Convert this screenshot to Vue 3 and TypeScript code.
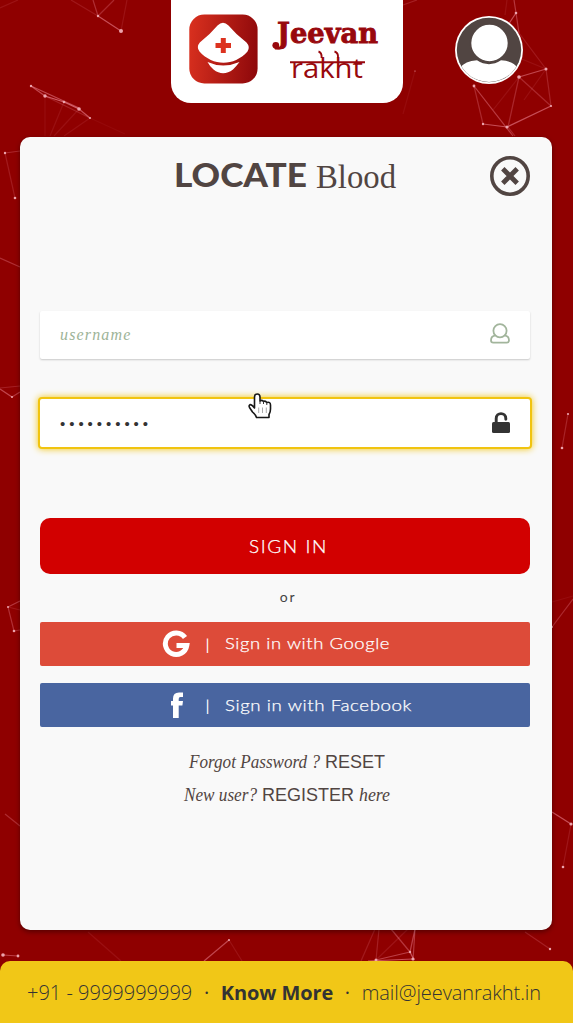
<script setup lang="ts">
type Line = [number, number, number, number, number]

const lines: Line[] = [
  [98, 16, 121, 31, 0.5], [93, 0, 98, 16, 0.3], [98, 16, 114, 0, 0.25], [121, 31, 127, 0, 0.12], [71, 0, 98, 16, 0.15], [0, 8, 18, 0, 0.12],
  [31, 86, 45, 96, 0.45], [45, 96, 64, 102, 0.6], [64, 102, 79, 109, 0.6], [79, 109, 90, 118, 0.5], [31, 86, 79, 108, 0.45], [45, 96, 90, 118, 0.2],
  [45, 97, 45, 136, 0.08], [64, 102, 50, 136, 0.1], [79, 109, 54, 136, 0.1], [90, 118, 64, 136, 0.1], [90, 118, 125, 134, 0.06],
  [5, 153, 20, 151, 0.25], [5, 153, 15, 198, 0.17], [0, 258, 20, 267, 0.3], [0, 389, 12, 397, 0.45], [12, 397, 20, 392, 0.35], [0, 388, 20, 386, 0.2],
  [8, 607, 20, 601, 0.35], [8, 607, 14, 631, 0.3], [14, 631, 20, 630, 0.25], [8, 607, 20, 610, 0.15], [5, 814, 20, 826, 0.28], [3, 955, 18, 956, 0.4],
  [204, 961, 229, 940, 0.45], [229, 940, 242, 961, 0.12], [88, 932, 121, 961, 0.1],
  [376, 960, 410, 952, 0.4], [410, 952, 391, 929, 0.35], [410, 952, 415, 929, 0.4], [413, 960, 415, 929, 0.35], [376, 960, 379, 929, 0.2], [361, 961, 375, 929, 0.17],
  [376, 960, 408, 929, 0.13], [413, 959, 368, 961, 0.5], [410, 952, 414, 960, 0.5], [525, 932, 550, 949, 0.2],
  [514, 0, 516, 13, 0.35], [507, 0, 505, 15, 0.1], [516, 13, 508, 25, 0.5], [516, 13, 519, 33, 0.35], [519, 33, 546, 69, 0.16], [519, 77, 546, 69, 0.45], [519, 77, 508, 127, 0.25],
  [500, 50, 546, 69, 0.1], [546, 69, 551, 106, 0.22], [519, 77, 551, 106, 0.25], [551, 106, 507, 127, 0.5], [507, 127, 483, 124, 0.5], [483, 124, 474, 86, 0.25],
  [474, 86, 513, 136, 0.38], [508, 127, 515, 136, 0.25], [546, 69, 524, 100, 0.1], [519, 77, 493, 110, 0.1],
  [568, 414, 562, 448, 0.23], [552, 627, 573, 599, 0.27], [552, 602, 573, 596, 0.08], [552, 812, 571, 824, 0.5], [571, 824, 563, 867, 0.14],
  [403, 5, 417, 0, 0.2], [403, 114, 415, 71, 0.07],
]

const nodes: [number, number, number][] = [
  [98, 16, 1.2], [121, 31, 2], [31, 86, 1.2], [45, 96, 1.7], [64, 102, 1.3], [79, 109, 1.8], [90, 118, 1.1], [5, 153, 1.2], [15, 198, 1.3], [8, 607, 1],
  [14, 631, 1.3], [12, 397, 1], [3, 955, 1.8], [18, 956, 1.4], [229, 940, 1], [376, 960, 1.5], [413, 959, 1.6], [410, 952, 1.2], [550, 949, 1.2], [516, 13, 1.3],
  [519, 77, 1.8], [546, 69, 1.5], [551, 106, 1.1], [507, 127, 1.5], [483, 124, 1.2], [474, 86, 1.4], [568, 414, 1.1], [562, 448, 1.3], [571, 824, 1.6], [563, 867, 1.3],
  [415, 71, 0.6], [552, 627, 0.9],
]
</script>

<template>
  <main class="screen">
    <svg class="network" viewBox="0 0 573 1023" aria-hidden="true">
      <line v-for="(l, i) in lines" :key="`l${i}`" :x1="l[0]" :y1="l[1]" :x2="l[2]" :y2="l[3]" :stroke-opacity="l[4]" />
      <circle v-for="(n, i) in nodes" :key="`n${i}`" :cx="n[0]" :cy="n[1]" :r="n[2]" />
    </svg>

    <header class="top">
      <div class="brand">
        <svg width="232" height="103" viewBox="171 0 232 103">
          <defs>
            <linearGradient id="badge" x1="0" x2="1" y1="0.45" y2="0.55">
              <stop offset="0" stop-color="#d72f1e" />
              <stop offset="1" stop-color="#8f090b" />
            </linearGradient>
          </defs>
          <rect x="189.3" y="14.5" width="68.3" height="69" rx="15" fill="url(#badge)" />
          <path d="M217.500 25.500Q223 20 228.500 25.500Q236 34.500 246.500 42.500Q250.500 47 247.500 51.500C234 66.500 213 66.500 199.500 51.500Q196 47 199.800 42.500Q210 34.500 217.500 25.500Z" fill="#fff" />
          <path d="M207.500 62Q223 69 239.500 62Q236.500 66 233 69.500Q223 77 213.500 69.500Q209.500 66 207.500 62Z" fill="#fff" />
          <path d="M220.800 38h5v5h5.200v5h-5.200v5h-5v-5h-5.300v-5h5.300z" fill="#dc321f" />
          <text class="jeevan" x="277" y="43" textLength="101" lengthAdjust="spacingAndGlyphs">Jeevan</text>
          <circle cx="275.800" cy="45.300" r="3.400" fill="#98080d" />
          <path d="M275 48.500Q283 49.500 284.500 41" fill="none" stroke="#98080d" stroke-width="2" />
          <text class="rakht" x="291" y="77.500" textLength="72" lengthAdjust="spacingAndGlyphs">rakht</text>
          <path d="M290 62.300H365M318.500 51.500Q322 52.500 321.600 58M334.500 51.500Q338.500 52.500 338 58" fill="none" stroke="#98080d" stroke-width="1.900" />
        </svg>
      </div>
      <svg class="avatar" width="68" height="68" viewBox="0 0 68 68">
        <defs><clipPath id="face"><circle cx="34" cy="34" r="32" /></clipPath></defs>
        <circle cx="34" cy="34" r="34" fill="#fff" />
        <circle cx="34" cy="34" r="32.200" fill="#514542" />
        <g clip-path="url(#face)" fill="#fff">
          <path d="M5 52Q10 45 22 44.300Q34 52 46 44.300Q58 45 63 52V70H5Z" />
          <circle cx="34.500" cy="27" r="19" stroke="#514542" stroke-width="1.600" />
        </g>
      </svg>
    </header>

    <section class="card">
      <div class="title">
        <svg class="heading" width="224" height="46" viewBox="174 153 224 46" role="heading">
          <text class="locate" x="174" y="187" textLength="133" lengthAdjust="spacingAndGlyphs">LOCATE</text>
          <text class="blood" x="316" y="187.500" textLength="80" lengthAdjust="spacingAndGlyphs">Blood</text>
        </svg>
        <svg class="close" width="40" height="40" viewBox="0 0 40 40" fill="none" stroke="#514542">
          <circle cx="20" cy="20" r="18.200" stroke-width="3.600" />
          <path d="M12.800 12.800L27.200 27.200M27.200 12.800L12.800 27.200" stroke-width="4.800" />
        </svg>
      </div>

      <div class="field">
        <span class="placeholder">username</span>
        <svg class="user" width="20" height="21" viewBox="0 0 20 21" fill="none" stroke="#a2b59c" stroke-width="1.800">
          <circle cx="10" cy="7.700" r="6.600" />
          <path d="M5.500 12.300C2.500 12.700 1 14.500 1 17.300Q1 19.700 3.300 19.700H16.700Q19 19.700 19 17.300C19 14.500 17.500 12.700 14.500 12.300" />
        </svg>
      </div>
      <div class="field focused">
        <span class="dots">••••••••••</span>
        <svg class="lock" width="18" height="21" viewBox="0 0 18 21">
          <path d="M4.200 12V6.500C4.200 0 13.800 0 13.800 6.500V7.300" fill="none" stroke="#333" stroke-width="2.900" stroke-linecap="round" />
          <rect y="10" width="18" height="11" rx="1.500" fill="#333" />
        </svg>
        <svg class="pointer" width="24" height="26" viewBox="0 0 24 26">
          <path d="M6.500 15V4Q6.500 1 9.200 1Q12 1 12 4V8Q14 6.500 15.500 8.500Q17.500 7.500 18.700 9.500Q22.500 8.500 22.500 12V16Q22.500 19 21 21.500V24.500H8.500Q7.500 21.500 4.500 19L1.500 14.500Q.5 12.500 2 11.600Q4 11.500 6.500 15Z" fill="#fff" stroke="#171717" stroke-width="1.600" stroke-linejoin="round" />
          <path d="M12 8v3M15.500 8.500v2.500M18.800 9.500V12" stroke="#333" />
          <path d="M10.700 14.500v5.500M14.500 14.500v5.500M18.300 14.500v5.500" stroke="#aaa" />
        </svg>
      </div>

      <button class="signin">
        <svg width="84" height="30" viewBox="0 0 84 30"><text x="6" y="21.500" textLength="79" lengthAdjust="spacingAndGlyphs" font-size="18" letter-spacing="1.500">SIGN IN</text></svg>
      </button>
      <div class="or">or</div>
      <button class="social google">
        <svg class="logo" width="28" height="28" viewBox="0 0 28 28">
          <path d="M23 7.500A10.800 10.800 0 1 0 24.800 15.500H14.500" fill="none" stroke="#fff" stroke-width="5" />
        </svg>
        <span class="bar">|</span>
        <svg width="172" height="26" viewBox="0 0 172 26"><text x="0" y="18" textLength="165" lengthAdjust="spacingAndGlyphs" font-size="16" letter-spacing=".5">Sign in with Google</text></svg>
      </button>
      <button class="social facebook">
        <svg class="logo" width="28" height="28" viewBox="0 0 28 28">
          <path d="M21 1.500V6H18.400Q16.700 6 16.700 8V10H21L20.400 14.500H16.700V27H11V14.500H9V10H11V7.500Q11 1.500 17 1.500Z" fill="#fff" />
        </svg>
        <span class="bar">|</span>
        <svg width="192" height="26" viewBox="0 0 192 26"><text x="0" y="18.500" textLength="187" lengthAdjust="spacingAndGlyphs" font-size="16" letter-spacing=".5">Sign in with Facebook</text></svg>
      </button>

      <div class="links">
        <svg width="216" height="66" viewBox="183 745 216 66">
          <g fill="#514542">
            <text class="note" x="189" y="767.500" textLength="131" lengthAdjust="spacingAndGlyphs">Forgot Password ?</text>
            <text class="action" x="325" y="767.500" textLength="60" lengthAdjust="spacingAndGlyphs">RESET</text>
            <text class="note" x="184" y="800.500" textLength="73" lengthAdjust="spacingAndGlyphs">New user?</text>
            <text class="action" x="262" y="800.500" textLength="92" lengthAdjust="spacingAndGlyphs">REGISTER</text>
            <text class="note" x="359" y="800.500" textLength="31" lengthAdjust="spacingAndGlyphs">here</text>
          </g>
        </svg>
      </div>
    </section>

    <footer class="foot">
      <span>+91 - 9999999999</span><b class="dot">·</b><strong>Know More</strong><b class="dot">·</b><span class="mail">mail@jeevanrakht.in</span>
    </footer>
  </main>
</template>

<style>
body { margin: 0; background: #8f0000; }
</style>

<style scoped>
* { box-sizing: border-box; }
.screen { position: relative; width: 573px; height: 1023px; overflow: hidden; background: #8f0000; font-family: "Liberation Sans", sans-serif; display: flex; flex-direction: column; }
svg { display: block; flex: none; }
.network { position: absolute; inset: 0; width: 573px; height: 1023px; }
.network line { stroke: #ff9cae; stroke-width: 1.2; }
.network circle { fill: #eca4ad; }
.top { position: relative; display: flex; height: 136.500px; padding-left: 170.500px; align-items: flex-start; }
.brand { width: 232px; height: 103px; overflow: hidden; background: #fff; border-radius: 0 0 20px 20px; }
.jeevan { font: bold 28.500px "DejaVu Serif", serif; fill: #98080d; stroke: #98080d; stroke-width: .9; }
.rakht { font: 28px "Open Sans", sans-serif; fill: #98080d; }
.avatar { margin: 16px 0 0 52px; }
.card { position: relative; width: 531.500px; height: 793px; margin-left: 20px; padding: 0 21.500px 0 20px; background: #f9f9f9; border-radius: 10px; box-shadow: 0 2px 5px rgba(0,0,0,.4); display: flex; flex-direction: column; }
.title { display: flex; height: 174.500px; padding: 16.500px 0 0 134px; justify-content: space-between; align-items: flex-start; }
.close { margin-top: 3px; }
.locate { font: 900 32px Lato, sans-serif; fill: #514542; }
.blood { font: 33px "Liberation Serif", serif; fill: #514542; }
.field { position: relative; display: flex; align-items: center; justify-content: space-between; height: 48px; flex: none; padding: 0 20px; background: #fff; border-radius: 2px; box-shadow: 0 1px 2px rgba(0,0,0,.2); }
.placeholder { font: italic 16px "Liberation Serif", serif; color: #9db397; letter-spacing: 1.150px; }
.user { position: relative; top: -1.500px; }
.lock { position: relative; top: -.500px; }
.focused { margin-top: 40px; box-shadow: 0 0 0 2px #f1c40f, 0 0 7px 2px #f1c40f; }
.dots { font-size: 15px; letter-spacing: 3.950px; color: #333; }
.pointer { position: absolute; left: 208px; top: -6px; }
button { display: flex; align-items: center; border: 0; padding: 0; flex: none; color: #fff; }
button text { font-family: Lato, sans-serif; font-weight: 300; fill: #fff; stroke: #fff; stroke-width: .25; }
.signin { height: 56px; margin-top: 71px; justify-content: center; border-radius: 10px; background: #d20000; }
.social { height: 44px; padding-left: 122px; border-radius: 2px; }
.google { background: #dd4b39; }
.facebook { margin-top: 17px; background: #4965a0; }
.bar { width: 35px; padding-bottom: 2px; font: 16px Lato, sans-serif; text-align: center; }
.or { height: 48px; padding-left: 6px; font: 14px/46px Lato, sans-serif; letter-spacing: 1.800px; text-align: center; color: #444; }
.links { display: flex; padding: 18px 0 0 143px; }
.note { font: italic 18.500px "Liberation Serif", serif; }
.action { font: 19px "Liberation Sans", sans-serif; }
.foot { position: relative; display: flex; width: 573px; height: 62px; margin-top: 31.500px; padding: 0 32px 0 27px; align-items: center; background: #f1c717; border-radius: 10px 10px 0 0; color: #333; font: 300 20px "Open Sans", sans-serif; justify-content: space-between; white-space: nowrap; }
strong, .dot { font-weight: 700; }
.dot { font-weight: 500; }
strong { letter-spacing: -.1px; }
.mail { letter-spacing: -.080px; }
</style>
